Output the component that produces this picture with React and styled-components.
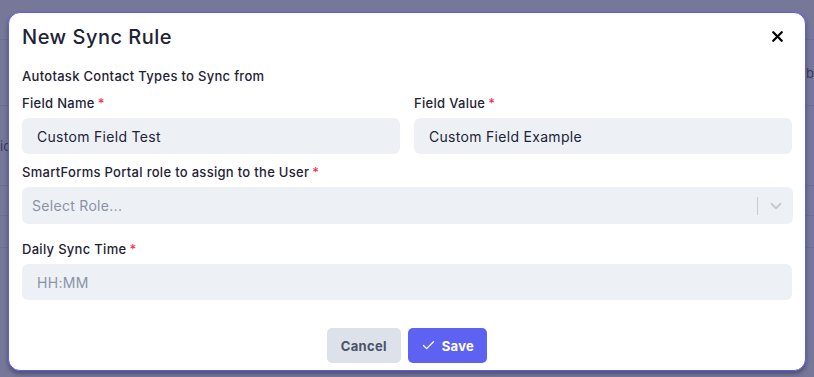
import React from "react";
import styled, { createGlobalStyle } from "styled-components";
import { Check, ChevronDown, X } from "lucide-react";

const GlobalStyle = createGlobalStyle`
  html, body {
    margin: 0;
    padding: 0;
    height: 100%;
  }
  body {
    font-family: Inter, "Open Sans", sans-serif;
    background: #77779a;
  }
  * {
    box-sizing: border-box;
  }
`;

const Backdrop = styled.div`
  position: relative;
  width: 814px;
  height: 377px;
  overflow: hidden;
  background: #77779a;
  display: flex;
  flex-direction: column;
`;

const GhostRow = styled.div`
  height: ${(p) => p.h}px;
  border-bottom: 1px solid #6f6f92;
  display: flex;
  align-items: center;
  justify-content: space-between;
  font-size: 13px;
  color: #3a3a58;
`;

const Modal = styled.div`
  position: absolute;
  left: 8px;
  top: 12px;
  width: 798px;
  height: 359px;
  background: #ffffff;
  border: 1px solid #5b5bf5;
  border-radius: 12px;
  box-shadow: 0 3px 4px rgba(30, 30, 60, 0.45);
  padding: 0 13px 0 13px;
  display: flex;
  flex-direction: column;
  letter-spacing: 0.3px;
`;

const Header = styled.div`
  height: 47px;
  display: flex;
  align-items: center;
  justify-content: space-between;
`;

const Title = styled.h2`
  margin: 0;
  font-size: 20px;
  font-weight: 500;
  color: #1e2335;
  letter-spacing: 0.5px;
`;

const CloseButton = styled.button`
  border: 0;
  background: none;
  padding: 0;
  display: flex;
  color: #000;
  cursor: pointer;
  margin-right: 6px;
`;

const Body = styled.div`
  display: flex;
  flex-direction: column;
`;

const Note = styled.div`
  font-size: 13px;
  font-weight: 500;
  color: #1e2335;
  margin-top: 8px;
  margin-bottom: 11px;
`;

const Grid = styled.div`
  display: grid;
  grid-template-columns: 1fr 1fr;
  column-gap: 14px;
`;

const Field = styled.div`
  display: flex;
  flex-direction: column;
  margin-bottom: ${(p) => p.mb ?? 10}px;
`;

const Label = styled.label`
  font-size: 13px;
  font-weight: 500;
  color: #1e2335;
  margin-bottom: 7px;
  line-height: 16px;
`;

const Req = styled.span`
  color: #f0344f;
  margin-left: 3px;
`;

const Input = styled.div`
  height: 36px;
  border-radius: 6px;
  background: #edf1f5;
  display: flex;
  align-items: center;
  padding-left: 15px;
  font-size: 14px;
  color: ${(p) => (p.$placeholder ? "#8a93a5" : "#1e2335")};
`;

const SelectBox = styled.div`
  height: 37px;
  border-radius: 6px;
  background: #edf1f5;
  display: flex;
  align-items: center;
  padding-left: 10px;
  font-size: 14px;
  color: #8a93a5;
  margin-right: -1px;
`;

const SelectValue = styled.span`
  flex: 1;
`;

const Divider = styled.span`
  width: 1px;
  height: 18px;
  background: #c7ccd3;
`;

const Indicator = styled.span`
  width: 35px;
  display: flex;
  justify-content: center;
  color: #c4c8cf;
`;

const Footer = styled.div`
  display: flex;
  justify-content: center;
  gap: 7px;
  margin-top: 28px;
`;

const Button = styled.button`
  height: 35px;
  border: 0;
  border-radius: 5px;
  padding: 0 ${(p) => (p.$primary ? 13 : 14)}px;
  display: flex;
  align-items: center;
  gap: 6px;
  font-family: inherit;
  font-size: 13px;
  font-weight: 700;
  letter-spacing: 0.3px;
  background: ${(p) => (p.$primary ? "#5e62f2" : "#dde1ea")};
  color: ${(p) => (p.$primary ? "#ffffff" : "#4a5368")};
  cursor: pointer;
`;

export default function App() {
  return (
    <>
      <GlobalStyle />
      <Backdrop>
        <GhostRow h={40} />
        <GhostRow h={66}>
          <span />
          <span>nb</span>
        </GhostRow>
        <GhostRow h={80}>
          <span>ic</span>
        </GhostRow>
        <GhostRow h={30} />
        <GhostRow h={32} />
        <Modal>
          <Header>
            <Title>New Sync Rule</Title>
            <CloseButton aria-label="Close">
              <X size={17} strokeWidth={3.2} />
            </CloseButton>
          </Header>
          <Body>
            <Note>Autotask Contact Types to Sync from</Note>
            <Grid>
              <Field>
                <Label>
                  Field Name<Req>*</Req>
                </Label>
                <Input>Custom Field Test</Input>
              </Field>
              <Field>
                <Label>
                  Field Value<Req>*</Req>
                </Label>
                <Input>Custom Field Example</Input>
              </Field>
            </Grid>
            <Field mb={17}>
              <Label>
                SmartForms Portal role to assign to the User<Req>*</Req>
              </Label>
              <SelectBox>
                <SelectValue>Select Role...</SelectValue>
                <Divider />
                <Indicator>
                  <ChevronDown size={18} strokeWidth={2.4} />
                </Indicator>
              </SelectBox>
            </Field>
            <Field mb={0}>
              <Label>
                Daily Sync Time<Req>*</Req>
              </Label>
              <Input $placeholder>HH:MM</Input>
            </Field>
            <Footer>
              <Button>Cancel</Button>
              <Button $primary>
                <Check size={15} strokeWidth={2} />
                Save
              </Button>
            </Footer>
          </Body>
        </Modal>
      </Backdrop>
    </>
  );
}
